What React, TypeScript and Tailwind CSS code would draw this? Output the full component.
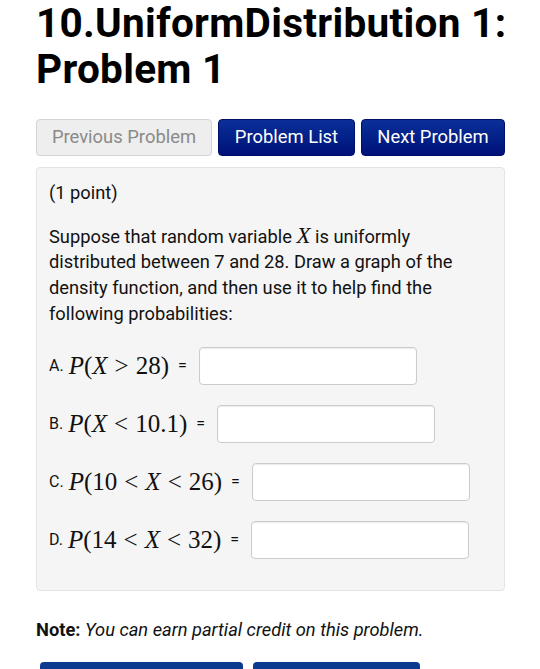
import React from 'react';

const blueBtn =
    'h-[37px] px-[12px] whitespace-nowrap rounded-[4px] border border-[#00106a] bg-gradient-to-b from-[#0b2f98] to-[#001079] text-white text-[18.4px] leading-none';

function M({ children }: { children: React.ReactNode }) {
    return <span className="font-['Liberation_Serif',serif] text-[25px] leading-none">{children}</span>;
}

function V({ children }: { children: React.ReactNode }) {
    return <i className="font-['Liberation_Serif',serif]">{children}</i>;
}

function Rel({ children }: { children: React.ReactNode }) {
    return <span className="mx-[7px]">{children}</span>;
}

function AnswerRow({ label, expr }: { label: string; expr: React.ReactNode }) {
    return (
        <div className="flex items-center h-[38px]">
            <span className="text-[16px] mr-[5px]">{label}</span>
            <M>{expr}</M>
            <span className="text-[16px] ml-[9px] mr-[12px]">=</span>
            <div className="w-[218px] h-[38px] bg-white border border-[#cccccc] rounded-[4px] shadow-[inset_0_1px_1px_rgba(0,0,0,0.08)]" />
        </div>
    );
}

export default function App() {
    return (
        <div className="bg-white min-h-[669px] pl-[36px] pr-[35px] font-['Roboto','Liberation_Sans',sans-serif] text-[#111111]">
            <h1 className="text-[40.5px] leading-[46px] font-bold text-black tracking-[0.3px] whitespace-nowrap">
                10.UniformDistribution 1:
                <br />
                Problem 1
            </h1>

            {/* Navigation */}
            <div className="flex gap-[6px] mt-[27px]">
                <button className="h-[37px] w-[176px] whitespace-nowrap rounded-[4px] border border-[#d4d4d4] bg-[#eeeeee] text-[#8a8a8a] text-[18.4px] leading-none">
                    Previous Problem
                </button>
                <button className={blueBtn + ' w-[137px]'}>Problem List</button>
                <button className={blueBtn + ' w-[144px]'}>Next Problem</button>
            </div>

            {/* Problem body */}
            <div className="mt-[11px] bg-[#f5f5f5] border border-[#e3e3e3] rounded-[4px] pl-[12px] pr-[16px] pt-[12px] pb-[31px] text-[18.3px] leading-[25.7px]">
                <p>(1 point)</p>
                <p className="mt-[18px]">
                    Suppose that random variable{' '}
                    <span className="inline-block text-[23px] leading-[20px]"><V>X</V></span> is uniformly
                    distributed between 7 and 28. Draw a graph of the density function, and then use it to help find the
                    following probabilities:
                </p>

                <div className="mt-[20px] flex flex-col gap-[20px]">
                    <AnswerRow
                        label="A."
                        expr={<><V>P</V>(<V>X</V><Rel>&gt;</Rel>28)</>}
                    />
                    <AnswerRow
                        label="B."
                        expr={<><V>P</V>(<V>X</V><Rel>&lt;</Rel>10.1)</>}
                    />
                    <AnswerRow
                        label="C."
                        expr={<><V>P</V>(10<Rel>&lt;</Rel><V>X</V><Rel>&lt;</Rel>26)</>}
                    />
                    <AnswerRow
                        label="D."
                        expr={<><V>P</V>(14<Rel>&lt;</Rel><V>X</V><Rel>&lt;</Rel>32)</>}
                    />
                </div>
            </div>

            <p className="mt-[26px] text-[18.3px] leading-[25px]">
                <b>Note:</b> <i>You can earn partial credit on this problem.</i>
            </p>

            <div className="flex gap-[10px] mt-[20px] pl-[4px]">
                <div className="w-[203px] h-[38px] rounded-[4px] bg-[#0b3a8e]" />
                <div className="w-[167px] h-[38px] rounded-[4px] bg-[#0b3a8e]" />
            </div>
        </div>
    );
}
